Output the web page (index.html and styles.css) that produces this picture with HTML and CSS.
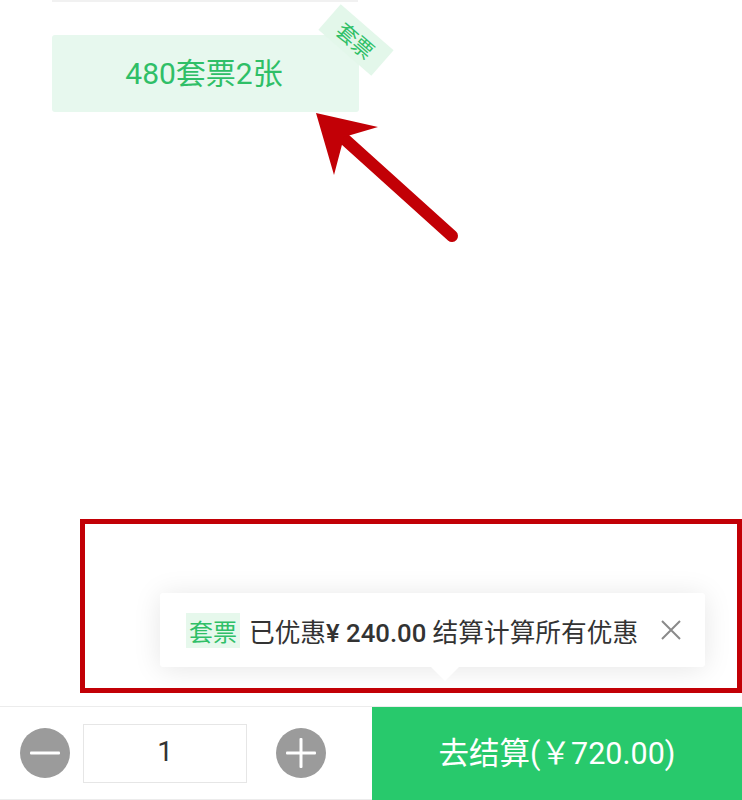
FILE: index.html
```html
<!DOCTYPE html>
<html lang="zh">
<head>
<meta charset="utf-8">
<link rel="stylesheet" href="styles.css">
</head>
<body>
<div class="page">
  <div class="prev-card"></div>
  <div class="pkg-card">
    <span class="pkg-name">480套票2张</span>
    <span class="corner-badge">套票</span>
  </div>
  <div class="spacer"></div>
  <div class="bottom-bar">
    <div class="qty">
      <span class="qty-btn minus"><svg width="50" height="50" viewBox="0 0 50 50"><circle cx="25" cy="25" r="25" fill="#9b9b9b"/><rect x="10" y="23.5" width="30" height="3" rx="1" fill="#fff"/></svg></span>
      <span class="qty-input">1</span>
      <span class="qty-btn plus"><svg width="50" height="50" viewBox="0 0 50 50"><circle cx="25" cy="25" r="25" fill="#9b9b9b"/><rect x="10" y="23.5" width="30" height="3" rx="1" fill="#fff"/><rect x="23.5" y="10" width="3" height="30" rx="1" fill="#fff"/></svg></span>
    </div>
    <div class="checkout">去结算(￥720.00)</div>
  </div>

  <div class="tooltip">
    <span class="tag">套票</span>
    <span class="tip-text">已优惠<b>¥ 240.00</b> 结算计算所有优惠</span>
    <svg class="close" width="20" height="20" viewBox="0 0 20 20"><path d="M1 1 L19 19 M19 1 L1 19" stroke="#8a8a8a" stroke-width="2" fill="none"/></svg>
    <span class="tip-arrow"></span>
  </div>

  <div class="red-box"></div>
  <svg class="arrow" width="742" height="800" viewBox="0 0 742 800">
    <line x1="452" y1="236" x2="340" y2="135" stroke="#c20006" stroke-width="12" stroke-linecap="round"/>
    <polygon points="316,113 378,127 344,137 334,175" fill="#c20006"/>
  </svg>
</div>
</body>
</html>
```

FILE: styles.css
```css
* { box-sizing: border-box; }
html, body { margin: 0; padding: 0; background: #fff; }
body {
  font-family: Roboto, "Noto Sans CJK SC", "Noto Sans", sans-serif;
  width: 742px;
  height: 800px;
  overflow: hidden;
}
.page {
  position: relative;
  display: flex;
  flex-direction: column;
  height: 800px;
}
.prev-card {
  margin-left: 52px;
  width: 306px;
  height: 2px;
  background: #f1f1f1;
}
.pkg-card {
  position: relative;
  margin: 33px 0 0 52px;
  width: 307px;
  height: 77px;
  padding-bottom: 6px;
  background: #e7f8ee;
  border-radius: 3px;
  display: flex;
  align-items: center;
  justify-content: center;
  color: #2fbf67;
  font-size: 30px;
}
.pkg-name { margin-right: 3px; }
.corner-badge {
  position: absolute;
  left: 269px;
  top: -12px;
  width: 70px;
  height: 34px;
  background: #e3f7ea;
  color: #2fbf67;
  font-size: 21px;
  display: flex;
  align-items: center;
  justify-content: center;
  transform: rotate(41deg);
}
.spacer { flex: 1; }
.bottom-bar {
  height: 94px;
  display: flex;
  border-top: 1px solid #ececec;
  border-bottom: 1px solid #ececec;
}
.qty {
  width: 372px;
  display: flex;
  align-items: center;
  padding-left: 20px;
}
.qty-btn { display: flex; width: 50px; height: 50px; }
.qty-input {
  margin-left: 13px;
  width: 164px;
  height: 59px;
  padding-bottom: 4px;
  border: 1px solid #e6e6e6;
  display: flex;
  align-items: center;
  justify-content: center;
  font-size: 28px;
  color: #333;
}
.plus { margin-left: 29px; }
.checkout {
  flex: 1;
  margin-bottom: -1px;
  padding-bottom: 6px;
  background: #28c96c;
  color: #fff;
  font-size: 30.5px;
  display: flex;
  align-items: center;
  justify-content: center;
}
.tooltip {
  position: absolute;
  left: 160px;
  top: 593px;
  width: 545px;
  height: 74px;
  background: #fff;
  border-radius: 3px;
  box-shadow: 0 2px 28px rgba(0,0,0,0.10);
  display: flex;
  align-items: center;
  padding-left: 26px;
  color: #333;
  font-size: 25.7px;
}
.tag {
  background: #e6f8ec;
  color: #2fbf67;
  font-size: 24px;
  height: 35px;
  padding: 0 3px;
  display: flex;
  align-items: center;
  margin-right: 9px;
}
.tip-text b { font-weight: 500; }
.close { margin-left: auto; margin-right: 24px; }
.tip-arrow {
  position: absolute;
  left: 271px;
  bottom: -14px;
  width: 0;
  height: 0;
  border-left: 14px solid transparent;
  border-right: 14px solid transparent;
  border-top: 14px solid #fff;
}
.red-box {
  position: absolute;
  left: 80px;
  top: 519px;
  width: 662px;
  height: 174px;
  border: 5px solid #c20006;
}
.arrow {
  position: absolute;
  left: 0;
  top: 0;
  pointer-events: none;
}
```
